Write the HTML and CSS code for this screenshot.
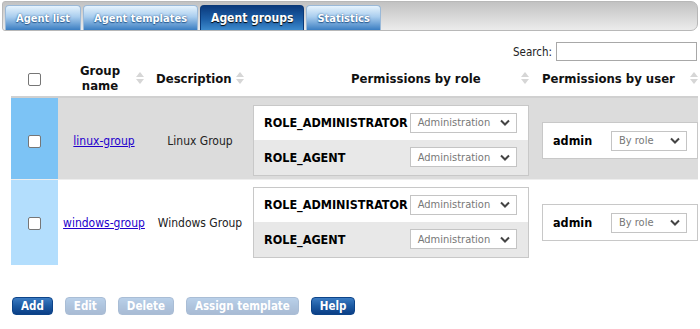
FILE: index.html
```html
<!DOCTYPE html>
<html lang="en">
<head>
    <meta charset="UTF-8">
    <title>Agent groups</title>
    <link rel="stylesheet" href="styles.css">
</head>
<body>
    <div class="page">
        <div class="tabbar">
            <a class="tab">Agent list</a>
            <a class="tab">Agent templates</a>
            <a class="tab active">Agent groups</a>
            <a class="tab">Statistics</a>
        </div>

        <div class="search">
            <label>Search:</label>
            <input type="text" class="search-input">
        </div>

        <table class="grid">
            <thead>
                <tr>
                    <th class="col-check"><span class="check"></span></th>
                    <th class="col-name sortable">Group<br>name</th>
                    <th class="col-desc sortable">Description</th>
                    <th class="col-role sortable">Permissions by role</th>
                    <th class="col-user sortable"><span class="clip">Permissions by user</span></th>
                </tr>
            </thead>
            <tbody>
                <tr class="odd">
                    <td class="col-check"><span class="check"></span></td>
                    <td class="center"><a href="#">linux-group</a></td>
                    <td class="center">Linux Group</td>
                    <td>
                        <table class="perm">
                            <tr>
                                <th>ROLE_ADMINISTRATOR</th>
                                <td><span class="select">Administration<svg width="10" height="7" viewBox="0 0 10 7"><path d="M1 1.5l4 4 4-4" fill="none" stroke="#444" stroke-width="2"/></svg></span></td>
                            </tr>
                            <tr class="alt">
                                <th>ROLE_AGENT</th>
                                <td><span class="select">Administration<svg width="10" height="7" viewBox="0 0 10 7"><path d="M1 1.5l4 4 4-4" fill="none" stroke="#444" stroke-width="2"/></svg></span></td>
                            </tr>
                        </table>
                    </td>
                    <td>
                        <table class="perm user">
                            <tr>
                                <th>admin</th>
                                <td><span class="select small">By role<svg width="10" height="7" viewBox="0 0 10 7"><path d="M1 1.5l4 4 4-4" fill="none" stroke="#444" stroke-width="2"/></svg></span></td>
                            </tr>
                        </table>
                    </td>
                </tr>
                <tr class="even">
                    <td class="col-check"><span class="check"></span></td>
                    <td class="center"><a href="#">windows-group</a></td>
                    <td class="center">Windows Group</td>
                    <td>
                        <table class="perm">
                            <tr>
                                <th>ROLE_ADMINISTRATOR</th>
                                <td><span class="select">Administration<svg width="10" height="7" viewBox="0 0 10 7"><path d="M1 1.5l4 4 4-4" fill="none" stroke="#444" stroke-width="2"/></svg></span></td>
                            </tr>
                            <tr class="alt">
                                <th>ROLE_AGENT</th>
                                <td><span class="select">Administration<svg width="10" height="7" viewBox="0 0 10 7"><path d="M1 1.5l4 4 4-4" fill="none" stroke="#444" stroke-width="2"/></svg></span></td>
                            </tr>
                        </table>
                    </td>
                    <td>
                        <table class="perm user">
                            <tr>
                                <th>admin</th>
                                <td><span class="select small">By role<svg width="10" height="7" viewBox="0 0 10 7"><path d="M1 1.5l4 4 4-4" fill="none" stroke="#444" stroke-width="2"/></svg></span></td>
                            </tr>
                        </table>
                    </td>
                </tr>
            </tbody>
        </table>

        <div class="actions">
            <button class="btn">Add</button>
            <button class="btn disabled">Edit</button>
            <button class="btn disabled">Delete</button>
            <button class="btn disabled">Assign template</button>
            <button class="btn">Help</button>
        </div>
    </div>
</body>
</html>
```

FILE: styles.css
```css
body {
    margin: 0;
    font-family: "DejaVu Sans Condensed", "DejaVu Sans", Verdana, sans-serif;
    font-size: 12px;
    color: #222;
    background: #fff;
}
.page {
    padding: 1px 2px 0 2px;
}
.tabbar {
    display: flex;
    align-items: flex-end;
    gap: 2px;
    height: 30px;
    padding: 0 0 0 2px;
    border: 1px solid #b8b8b8;
    border-radius: 3px 7px 7px 3px;
    background: linear-gradient(#c2c2c2, #ececec);
    box-sizing: border-box;
}
.tab {
    display: block;
    height: 25px;
    line-height: 25px;
    padding: 0 10px;
    border-radius: 4px 4px 0 0;
    border: 1px solid #9ab9d8;
    border-bottom: none;
    box-sizing: border-box;
    background: linear-gradient(#e6f3fd, #a9cdee 45%, #3b7ec2);
    color: #fff;
    font-weight: bold;
    font-size: 11px;
    text-shadow: 0 0 2px #2a5d93, 0 1px 1px #2a5d93;
}
.tab.active {
    border-color: #0a3978;
    background: linear-gradient(#0b3a7c, #1d5fa7 55%, #3c89cc);
    font-size: 12px;
    text-shadow: 0 1px 1px #000;
}
.search {
    display: flex;
    justify-content: flex-end;
    align-items: center;
    gap: 4px;
    margin-top: 11px;
}
.search label {
    font-size: 11.5px;
}
.search-input {
    width: 141px;
    height: 19px;
    box-sizing: border-box;
    border: 1px solid #a8a8a8;
    margin: 0 1px 0 0;
    padding: 0;
}
.grid {
    border-collapse: collapse;
    margin: 1px 0 0 9px;
    width: 687px;
    table-layout: fixed;
}
.grid th,
.grid td {
    box-sizing: border-box;
}
.grid > thead th {
    height: 35px;
    padding: 0 0 2px;
    font-size: 13px;
    line-height: 15px;
    color: #111;
    border-bottom: 2px solid #d0d0d0;
    position: relative;
    white-space: nowrap;
}
.grid > thead th.sortable::after {
    content: "";
    position: absolute;
    top: 10px;
    right: 6px;
    border-left: 4px solid transparent;
    border-right: 4px solid transparent;
    border-bottom: 5px solid #d6d6d6;
}
.grid > thead th.sortable::before {
    content: "";
    position: absolute;
    top: 17px;
    right: 6px;
    border-left: 4px solid transparent;
    border-right: 4px solid transparent;
    border-top: 5px solid #d6d6d6;
}
.grid > thead th.col-user::after,
.grid > thead th.col-user::before {
    right: 0;
}
.col-check { width: 47px; text-align: center; }
.col-name { width: 92px; padding-right: 8px !important; }
.col-desc { width: 100px; text-align: left; padding-left: 6px !important; }
.col-role { width: 285px; padding-left: 101px !important; text-align: left; }
.col-user { text-align: left; padding-left: 7px !important; }
.clip {
    display: block;
    overflow: hidden;
    width: 145px;
}
.check {
    display: inline-block;
    width: 11px;
    height: 11px;
    border: 1px solid #767676;
    border-radius: 2px;
    background: #fff;
    vertical-align: middle;
}
.grid > tbody > tr > td {
    padding: 7px 0 3px;
    vertical-align: middle;
}
.grid > tbody > tr.odd > td { background: #dcdcdc; border-bottom: 1px solid #eee; }
.grid > tbody > tr.even > td { background: #fff; padding-bottom: 7px; }
.grid > tbody > tr.odd > td.col-check { background: #7cc3f5; }
.grid > tbody > tr.even > td.col-check { background: #b3defd; }
.center { text-align: center; }
.grid a {
    color: #2200cc;
}
.perm {
    border-collapse: collapse;
    border: 1px solid #c8c8c8;
    background: #fff;
    margin-left: 3px;
    width: 275px;
}
.perm th {
    text-align: left;
    font-size: 12.5px;
    color: #000;
    padding: 0 2px 0 10px;
    height: 34px;
    white-space: nowrap;
}
.perm td {
    padding: 0 11px 0 0;
    text-align: right;
}
.perm tr.alt th,
.perm tr.alt td {
    background: #e8e8e8;
    height: 36px;
}
.perm.user {
    margin-left: 7px;
    width: 156px;
}
.perm.user th {
    height: 36px;
}
.perm.user td { padding-right: 10px; }
.select {
    display: inline-flex;
    justify-content: space-between;
    align-items: center;
    box-sizing: border-box;
    width: 107px;
    height: 20px;
    padding: 0 6px 0 7px;
    border: 1px solid #c4c4c4;
    background: #fff;
    color: #777;
    font-size: 11px;
    vertical-align: middle;
}
.select.small {
    width: 76px;
}
.actions {
    display: flex;
    gap: 12px;
    margin: 32px 0 0 10px;
}
.btn {
    height: 18px;
    padding: 0 8px;
    border: 1px solid #0d4489;
    border-radius: 4px;
    background: linear-gradient(#3c7cc3, #1c5aa2 50%, #0b3f86);
    color: #fff;
    font-family: "DejaVu Sans Condensed", "DejaVu Sans", Verdana, sans-serif;
    font-weight: bold;
    font-size: 11.5px;
    line-height: 16px;
}
.btn.disabled {
    opacity: 0.35;
}
```
